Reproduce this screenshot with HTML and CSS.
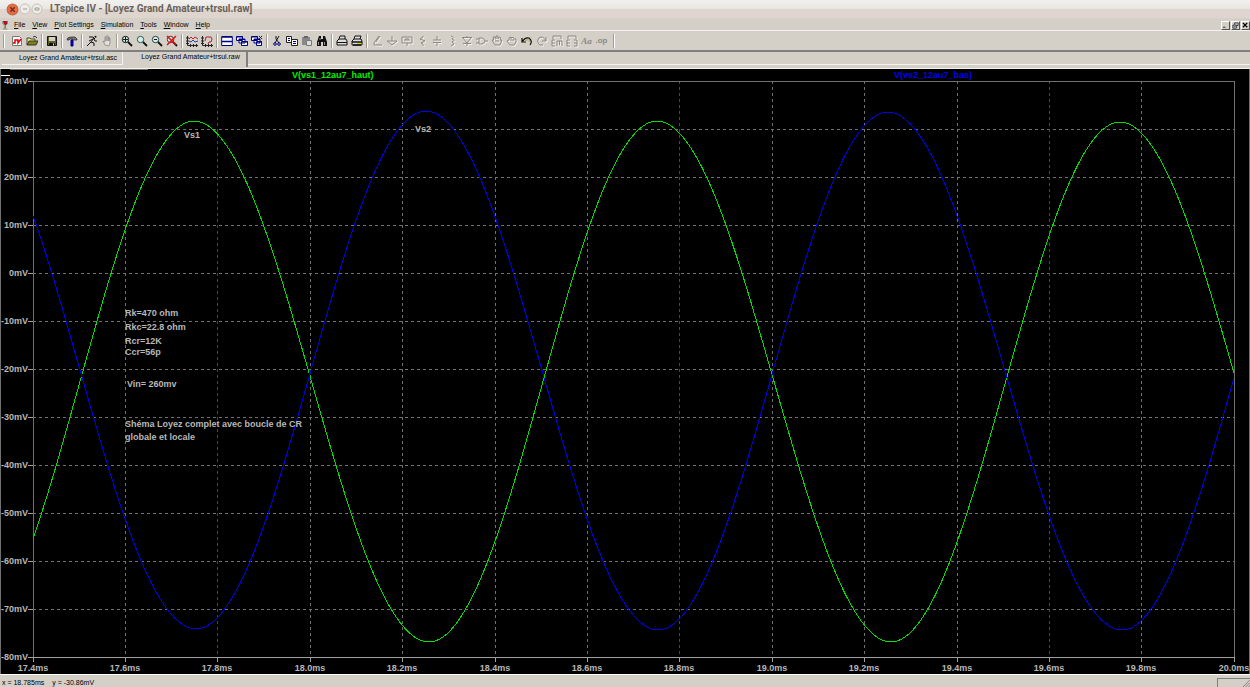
FILE: index.html
```html
<!DOCTYPE html>
<html lang="en">
<head>
<meta charset="utf-8">
<title>LTspice IV - [Loyez Grand Amateur+trsul.raw]</title>
<link rel="stylesheet" href="styles.css">
</head>
<body>
<header class="titlebar">
  <button class="wm wm-close" aria-label="Close window"><svg viewBox="0 0 12 12"><circle cx="6" cy="6" r="5" fill="#ee6840" stroke="#b8684c"/><path d="M4 4l4 4M8 4l-4 4" stroke="#65351f" stroke-width="1.4"/></svg></button>
  <button class="wm" aria-label="Minimize window"><svg viewBox="0 0 12 12"><circle cx="6" cy="6" r="5" fill="#efece8" stroke="#c8c2bc"/><path d="M4 6h4" stroke="#a09a94"/></svg></button>
  <button class="wm" aria-label="Restore window"><svg viewBox="0 0 12 12"><circle cx="6" cy="6" r="5" fill="#efece8" stroke="#c8c2bc"/><path d="M4 5h4v2h-4z" fill="none" stroke="#a09a94"/></svg></button>
  <h1 class="title">LTspice IV - [Loyez Grand Amateur+trsul.raw]</h1>
</header>
<nav class="menubar">
  <svg class="glass" viewBox="0 0 8 11"><path d="M1 1h5v3L4 6 2 4z" fill="#b01020"/><path d="M1 1v3l2 2v3M6 1v3L4 6v3M1 10h5" stroke="#555" stroke-width=".7" fill="none"/></svg>
  <button class="menu"><u>F</u>ile</button>
  <button class="menu"><u>V</u>iew</button>
  <button class="menu"><u>P</u>lot Settings</button>
  <button class="menu"><u>S</u>imulation</button>
  <button class="menu"><u>T</u>ools</button>
  <button class="menu"><u>W</u>indow</button>
  <button class="menu"><u>H</u>elp</button>
  <div class="mdi">
    <button aria-label="Minimize"><svg viewBox="0 0 8 8"><path d="M1 6h3" stroke="#222"/></svg></button>
    <button aria-label="Restore"><svg viewBox="0 0 8 8"><path d="M3 3V1h4v3H5M1 3.500h4V7H1z" fill="none" stroke="#234"/><path d="M2 5h2" stroke="#a44"/></svg></button>
    <button aria-label="Close"><svg viewBox="0 0 8 8"><path d="M1 1l5 5M6 1L1 6" stroke="#000" stroke-width="1.500"/></svg></button>
  </div>
</nav>
<div class="toolbar" role="toolbar" aria-label="Main">
  <span class="sep first"></span>
  <button aria-label="New schematic"><svg viewBox="0 0 12 12"><path d="M1.500 1.500h7l2 2v7h-9z" fill="#fff" stroke="#777"/><path d="M2 8h2V5h3v3l3-4" fill="none" stroke="#e00000" stroke-width="1.500"/></svg></button>
  <button aria-label="Open"><svg viewBox="0 0 12 12"><path d="M1 10V3h3l1 1h4v2" fill="#e8e880" stroke="#444"/><path d="M1 10l2-4h9l-2 4z" fill="#808010" stroke="#333"/><path d="M7 2q2-2 4 1" fill="none" stroke="#333"/></svg></button>
  <span class="sep"></span>
  <button aria-label="Save"><svg viewBox="0 0 12 12"><path d="M1.500 1.500h9v9h-9z" fill="#5c6020" stroke="#111"/><path d="M3 2h6v4H3z" fill="#d4d0c8"/><path d="M3 8h6v3H3z" fill="#111"/><path d="M7 8.500h1v2H7z" fill="#ddd"/></svg></button>
  <span class="sep"></span>
  <button aria-label="Control panel"><svg viewBox="0 0 12 12"><path d="M1 5q0-3 4-3h4l2 2v1H8L6 4 4 4 3 5z" fill="#777" stroke="#222" stroke-width=".7"/><path d="M5 5h2v6H5z" fill="#0000d0" stroke="#000080"/></svg></button>
  <span class="sep"></span>
  <button aria-label="Run"><svg viewBox="0 0 12 12"><circle cx="9.500" cy="1.800" r="1" fill="#111"/><path d="M3 2h4l2 2M8 3L5 7 1 11M3 6l4-2M5 7l3 1v3M8 4l1 2h2" fill="none" stroke="#111"/></svg></button>
  <button aria-label="Halt" disabled><svg viewBox="0 0 12 12"><path d="M4 10L2 6l2 1V2h1v4-5h2v5-4h1v4-3h1v5l-1 3z" fill="#e4e0d8" stroke="#888" stroke-width=".8"/></svg></button>
  <span class="sep"></span>
  <button aria-label="Zoom in"><svg viewBox="0 0 12 12"><circle cx="4.500" cy="4.500" r="3.200" fill="#d8eeee" stroke="#111"/><path d="M7 7l4 4" stroke="#111" stroke-width="1.800"/><path d="M2 4.500h5M4.500 2v5" stroke="#102010"/></svg></button>
  <button aria-label="Pan"><svg viewBox="0 0 12 12"><circle cx="4.500" cy="4.500" r="3.200" fill="#d0f0e8" stroke="#286058"/><path d="M7 7l4 4" stroke="#111" stroke-width="1.800"/></svg></button>
  <button aria-label="Zoom out"><svg viewBox="0 0 12 12"><circle cx="4.500" cy="4.500" r="3.200" fill="#d8eeee" stroke="#244"/><path d="M7 7l4 4" stroke="#111" stroke-width="1.800"/><path d="M3 4.500h3" stroke="#111"/></svg></button>
  <button aria-label="Zoom to fit"><svg viewBox="0 0 12 12"><circle cx="4.500" cy="4.500" r="3.200" fill="#d8eeee" stroke="#333"/><path d="M7 7l4 4" stroke="#111" stroke-width="1.800"/><path d="M1 1l9 9M10 1l-9 9" stroke="#e01010" stroke-width="1.500"/></svg></button>
  <span class="sep"></span>
  <button aria-label="Pick visible traces"><svg viewBox="0 0 12 12"><path d="M1.500 1v9.500H12M0 3h3M0 6h3M0 8.500h3M4.500 9v3M7.500 9v3M10.500 9v3" stroke="#222" fill="none"/><path d="M3 4l2-2 2 2 2-2 3 2" stroke="#c02030" fill="none"/><path d="M3 6l2 1 2-2 2 2 3-1" stroke="#3040b0" fill="none"/></svg></button>
  <button aria-label="Autorange"><svg viewBox="0 0 12 12"><path d="M1.500 1v9.500H12M0 3h3M0 6h3M0 8.500h3M4.500 9v3M7.500 9v3M10.500 9v3" stroke="#222" fill="none"/><path d="M4 6l1-4h5l1 2-1 3-2 0-1 2" stroke="#b82030" fill="none"/></svg></button>
  <span class="sep"></span>
  <button aria-label="Tile windows"><svg viewBox="0 0 12 12"><path d="M.7 1.500h10.600v9H.7z" fill="#fff" stroke="#000080"/><path d="M1 2h10M1 6.500h10" stroke="#000080" stroke-width="1.500"/></svg></button>
  <button aria-label="Cascade windows"><svg viewBox="0 0 12 12"><g fill="#fff" stroke="#000080"><path d="M.5 1.500h6v4h-6zM3 4h6v4H3zM5.500 6.500h6v4h-6z"/><path d="M1 2h6M3 4.500h6M6 7h6"/></g></svg></button>
  <button aria-label="Close windows"><svg viewBox="0 0 12 12"><g fill="#fff" stroke="#000080"><path d="M.5 1.500h6v4h-6zM3 4h6v4H3zM5.500 6.500h5v4h-5z"/><path d="M1 2h6M3 4.500h6M6 7h5"/></g><path d="M8 4l3-3M8 1l3 3" stroke="#222"/></svg></button>
  <span class="sep"></span>
  <button aria-label="Cut"><svg viewBox="0 0 12 12"><path d="M5 1v3l3 4M8 1L4 8" stroke="#111" fill="none"/><circle cx="4" cy="9" r="1.300" fill="none" stroke="#000080"/><circle cx="8" cy="9" r="1.300" fill="none" stroke="#000080"/></svg></button>
  <button aria-label="Copy"><svg viewBox="0 0 12 12"><path d="M.5 1.500h5v6h-5zM5.500 4.500h6v6h-6z" fill="#fff" stroke="#222"/><path d="M2 3.500h2M2 5.500h2M7 6.500h3M7 8.500h3" stroke="#000080"/></svg></button>
  <button aria-label="Paste" disabled><svg viewBox="0 0 12 12"><path d="M1 2h8v8H1z" fill="#888"/><path d="M3 1h4v2H3z" fill="#666"/><path d="M5.500 5.500h5v5h-5z" fill="#ddd" stroke="#777"/></svg></button>
  <button aria-label="Find"><svg viewBox="0 0 12 12"><path d="M3 1h2v3h2V1h2l2 6v4H7V7H5v4H1V7z" fill="#111"/><path d="M2.500 7v3M8.500 7v3M4 3v2" stroke="#ccc" stroke-width=".7"/></svg></button>
  <span class="sep"></span>
  <button aria-label="Print setup"><svg viewBox="0 0 12 12"><path d="M1 6l2-2h7l1 2v4H1zM3 4l1-3h5v3" fill="#ddd" stroke="#111"/><path d="M1 7.500h10" stroke="#111"/></svg></button>
  <button aria-label="Print"><svg viewBox="0 0 12 12"><path d="M1 6l2-2h7l1 2v4H1zM3 4l1-3h6L9 4" fill="#ddd" stroke="#111"/><path d="M1 7h10M2 10h8" stroke="#111" stroke-width="1.300"/><path d="M6 8.500h4" stroke="#e0d000"/></svg></button>
  <span class="sep"></span>
  <button aria-label="Wire" disabled><svg class="dim" viewBox="0 0 12 12"><path d="M8 1L3 8v2h8M9 1L5 7"/></svg></button>
  <button aria-label="Ground" disabled><svg class="dim" viewBox="0 0 12 12"><path d="M6 1v5M1 6h10L6 10z"/></svg></button>
  <button aria-label="Label net" disabled><svg class="dim" viewBox="0 0 12 12"><path d="M1 2h10v6H1zM6 8v3M4 6V4h4v2M6 4v2"/></svg></button>
  <button aria-label="Resistor" disabled><svg class="dim" viewBox="0 0 12 12"><path d="M7 1v1L4 4l5 2-4 2 2 1v2"/></svg></button>
  <button aria-label="Capacitor" disabled><svg class="dim" viewBox="0 0 12 12"><path d="M6 1v4M2 5h8M2 7.500h8M6 8v3"/></svg></button>
  <button aria-label="Inductor" disabled><svg class="dim" viewBox="0 0 12 12"><path d="M5 1q4 1 1 3 4 1 0 3 4 2-1 4"/></svg></button>
  <button aria-label="Diode" disabled><svg class="dim" viewBox="0 0 12 12"><path d="M1 2.500h10M6 1v1M2 3l4 5 4-5M2 8.500h8M6 9v2"/></svg></button>
  <button aria-label="Component" disabled><svg class="dim" viewBox="0 0 12 12"><path d="M3 3v6h3q3-1 3-3T6 3zM0 4h3M0 8h3M9 6h3"/></svg></button>
  <button aria-label="Move" disabled><svg class="dim" viewBox="0 0 12 12"><path d="M4 10L1 5l2 0-1-3 2 0 1 2 0-3h2v3l1-2 2 1-1 2h2L9 10zM4 6l4 0"/></svg></button>
  <button aria-label="Drag" disabled><svg class="dim" viewBox="0 0 12 12"><path d="M4 10L1 6l2-1V3l2-1 1 1 1-1 1 2 2 0v3L8 10zM5 3v3M7 4v2"/></svg></button>
  <button aria-label="Undo"><svg viewBox="0 0 12 12"><path d="M1 3v4h4M1 7q3-5 7-4 4 3 1 7" fill="none" stroke="#111" stroke-width="1.200"/><path d="M4 6q4-3 5 1" fill="none" stroke="#b8a810"/></svg></button>
  <button aria-label="Redo" disabled><svg class="dim" viewBox="0 0 12 12"><path d="M10 2v4H6M10 6Q7 0 3 3q-3 4 1 7h3"/></svg></button>
  <button aria-label="Rotate" disabled><svg class="dim" viewBox="0 0 12 12"><path d="M2 4V1h8v3M4 5H1v6h3M1 8h3M6 11V6h5v5M8.500 6v4"/></svg></button>
  <button aria-label="Mirror" disabled><svg class="dim" viewBox="0 0 12 12"><path d="M2 4V1h8v3M4 5H1v6h3M1 8h3M8 5h3v6H8M8 8h3"/></svg></button>
  <button class="aa" aria-label="Text" disabled>Aa</button>
  <button class="aa op" aria-label="SPICE directive" disabled>.op</button>
  <span class="sep last"></span>
</div>
<div class="tabs" role="tablist">
  <button class="tab" role="tab" aria-selected="false">Loyez Grand Amateur+trsul.asc</button>
  <button class="tab active" role="tab" aria-selected="true">Loyez Grand Amateur+trsul.raw</button>
  <span class="rest"></span>
</div>
<main class="plot">
<svg class="chart" viewBox="0 69 1250 605" role="img" aria-label="Waveforms">
  <defs><clipPath id="area"><path d="M33 81h1201v577H33z"/></clipPath></defs>
  <path class="edge" d="M10 69h138M0 69v605M1249 69v605"/>
  <path class="mark" d="M1 75h9"/>
  <path class="grid" d="M33 129H1234M33 177H1234M33 225H1234M33 273H1234M33 321H1234M33 369H1234M33 417H1234M33 465H1234M33 513H1234M33 561H1234M33 609H1234"/>
  <path class="grid" d="M125 81V657M310 81V657M402 81V657M495 81V657M587 81V657M772 81V657M864 81V657M957 81V657M1141 81V657"/>
  <path class="grid faint" d="M217 81V657M679 81V657M1049 81V657"/>
  <path class="frame" d="M33 81H1234V657H33z"/>
  <path class="tick" d="M28 81h5M28 129h5M28 177h5M28 225h5M28 273h5M28 321h5M28 369h5M28 417h5M28 465h5M28 513h5M28 561h5M28 609h5M28 657h1206M33 657v5M125 657v5M217 657v5M310 657v5M402 657v5M495 657v5M587 657v5M679 657v5M772 657v5M864 657v5M957 657v5M1049 657v5M1141 657v5M1234 657v5"/>
  <g clip-path="url(#area)">
    <path class="trace green" d="M-34 642C49 642 111 121 194 121C280 121 343 642 429 642C512 642 574 121 657 121C742 121 806 642 891 642C974 642 1037 122 1120 122C1205 122 1268 642 1353 642"/>
    <path class="trace blue" d="M-36 111C49 111 111 629 196 629C280 629 342 111 426 111C510 111 574 630 658 630C742 630 804 112 888 112C973 112 1037 630 1122 630C1205 630 1267 111 1350 111"/>
  </g>
  <g class="labels end">
    <text x="28" y="84">40mV</text><text x="28" y="132">30mV</text><text x="28" y="180">20mV</text><text x="28" y="228">10mV</text><text x="28" y="276">0mV</text><text x="28" y="324">-10mV</text><text x="28" y="372">-20mV</text><text x="28" y="420">-30mV</text><text x="28" y="468">-40mV</text><text x="28" y="516">-50mV</text><text x="28" y="564">-60mV</text><text x="28" y="612">-70mV</text><text x="28" y="660">-80mV</text>
  </g>
  <g class="labels mid">
    <text x="33" y="671">17.4ms</text><text x="125" y="671">17.6ms</text><text x="217" y="671">17.8ms</text><text x="310" y="671">18.0ms</text><text x="402" y="671">18.2ms</text><text x="495" y="671">18.4ms</text><text x="587" y="671">18.6ms</text><text x="679" y="671">18.8ms</text><text x="772" y="671">19.0ms</text><text x="864" y="671">19.2ms</text><text x="957" y="671">19.4ms</text><text x="1049" y="671">19.6ms</text><text x="1141" y="671">19.8ms</text><text x="1234" y="671">20.0ms</text>
  </g>
  <g class="labels">
    <text x="184" y="138">Vs1</text><text x="415" y="132">Vs2</text>
    <text x="125" y="316">Rk=470 ohm</text><text x="125" y="330">Rkc=22.8 ohm</text><text x="125" y="344">Rcr=12K</text><text x="125" y="355">Ccr=56p</text>
    <text x="127" y="387">Vin= 260mv</text>
    <text x="125" y="427">Shéma Loyez complet avec boucle de CR</text><text x="125" y="440">globale et locale</text>
    <text class="name-green" x="292" y="78">V(vs1_12au7_haut)</text><text class="name-blue" x="894" y="78">V(vs2_12au7_bas)</text>
  </g>
</svg>
</main>
<footer class="status">
  <span>x = 18.785ms</span><span>y = -30.86mV</span>
  <span class="grip"><svg viewBox="0 0 10 10"><path d="M1 10l9-9M4 10l6-6M7 10l3-3" stroke="#808080"/></svg></span>
</footer>
</body>
</html>
```
FILE: styles.css
```css
* { box-sizing: border-box; }
body {
  margin: 0;
  min-height: 100vh;
  display: flex;
  flex-direction: column;
  background: #d4d0c8;
  color: #000;
  font: 7px/10px "Liberation Sans", Arial, sans-serif;
}
button {
  margin: 0;
  padding: 0;
  border: 0;
  background: none;
  color: inherit;
  font: inherit;
}
svg { display: block; }

.titlebar {
  display: flex;
  align-items: center;
  height: 18px;
  padding-left: 6px;
  background: linear-gradient(#f2f1ef, #e8e6e0 50%, #ded5ce 51%, #ded5ce);
}
.wm { width: 12px; height: 12px; }
.wm-close { width: 13px; }
.title {
  margin: 0 0 0 7px;
  font: 700 10px/14px Roboto, sans-serif;
  color: #6a625a;
}

.menubar {
  display: flex;
  align-items: center;
  gap: 7px;
  height: 13px;
  padding: 2px 0 0 2px;
  border-bottom: 1px solid #f4f2ee;
}
.glass { width: 7px; height: 10px; margin-right: -2px; }
.mdi { display: flex; gap: 1px; margin-left: auto; }
.mdi button {
  width: 9px;
  height: 9px;
  border: 1px solid;
  border-color: #fff #555 #555 #fff;
}

.toolbar {
  display: flex;
  align-items: center;
  height: 19px;
  padding-left: 3px;
}
.toolbar button { display: grid; place-items: center; width: 15px; height: 15px; }
.toolbar svg { width: 12px; height: 12px; }
.sep {
  width: 2px;
  height: 14px;
  margin: 0 1px 0 2px;
  border-left: 1px solid #a09c94;
  border-right: 1px solid #fff;
}
.first { margin: 0 4px 0 0; }
.last { margin-left: 4px; }
.dim { fill: none; stroke: #8c8881; filter: drop-shadow(1px 1px 0 #f4f2ee); }
.toolbar .aa { color: #8c8881; font: italic 700 9px/12px "Liberation Serif", serif; }
.toolbar .op { font: 700 8px/12px "Liberation Sans", sans-serif; }

.tabs {
  display: flex;
  height: 19px;
  padding-left: 2px;
  border-top: 2px solid #808080;
  border-bottom: 1px solid #f4f2ee;
}
.tab {
  width: 121px;
  height: 13px;
  padding-left: 12px;
  border-right: 1px solid #f4f2ee;
  border-bottom: 1px solid #f4f2ee;
}
.active {
  width: 125px;
  height: 15px;
  padding-bottom: 5px;
  border-right: 2px solid #808080;
  border-bottom: 0;
}
.rest { flex: 1; height: 13px; border-bottom: 1px solid #f4f2ee; }

.plot {
  background: #000;
  border-bottom: 1px solid #fff;
}
.chart { width: 100%; height: auto; }
.edge, .mark, .grid, .frame, .tick, .trace {
  fill: none;
  stroke-width: 1;
  shape-rendering: crispEdges;
}
.edge { stroke: #707070; }
.mark { stroke: #fff; }
.grid { stroke: #707070; stroke-dasharray: 3 3; }
.faint { stroke: #484848; }
.frame { stroke: #707070; }
.tick { stroke: #a0a0a0; }
.green { stroke: #00e000; }
.blue { stroke: #0000e0; }
.labels { font: 700 9px "Liberation Sans", Arial, sans-serif; fill: #b8b8b8; }
.end { text-anchor: end; }
.mid { text-anchor: middle; }
.name-green { fill: #00f000; }
.name-blue { fill: #0000f0; }

.status {
  display: flex;
  gap: 8px;
  align-items: center;
  height: 12px;
  padding: 3px 0 0 2px;
}
.grip {
  display: flex;
  justify-content: flex-end;
  width: 33px;
  height: 10px;
  margin-left: auto;
  border-top: 1px solid #808080;
  border-left: 1px solid #808080;
}
.grip svg { width: 9px; height: 9px; }
```
